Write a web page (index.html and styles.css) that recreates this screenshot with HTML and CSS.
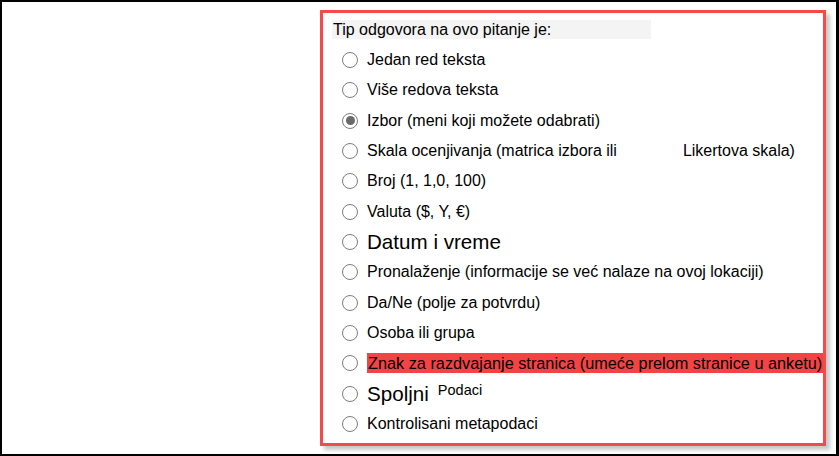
FILE: index.html
```html
<!DOCTYPE html>
<html lang="sr">
<head>
<meta charset="utf-8">
<title>Tip odgovora</title>
<link rel="stylesheet" href="styles.css">
</head>
<body>
<div class="frame">
  <div class="panel">
    <div class="header">Tip odgovora na ovo pitanje je:</div>
    <div class="list">
      <div class="row"><span class="radio"></span><span class="label">Jedan red teksta</span></div>
      <div class="row"><span class="radio"></span><span class="label">Više redova teksta</span></div>
      <div class="row"><span class="radio checked"></span><span class="label">Izbor (meni koji možete odabrati)</span></div>
      <div class="row"><span class="radio"></span><span class="label">Skala ocenjivanja (matrica izbora ili<span class="gap">Likertova skala)</span></span></div>
      <div class="row"><span class="radio"></span><span class="label">Broj (1, 1,0, 100)</span></div>
      <div class="row"><span class="radio"></span><span class="label">Valuta ($, Y, €)</span></div>
      <div class="row"><span class="radio"></span><span class="label big">Datum i vreme</span></div>
      <div class="row"><span class="radio"></span><span class="label">Pronalaženje (informacije se već nalaze na ovoj lokaciji)</span></div>
      <div class="row"><span class="radio"></span><span class="label">Da/Ne (polje za potvrdu)</span></div>
      <div class="row"><span class="radio"></span><span class="label">Osoba ili grupa</span></div>
      <div class="row"><span class="radio"></span><span class="label hl">Znak za razdvajanje stranica (umeće prelom stranice u anketu)</span></div>
      <div class="row"><span class="radio"></span><span class="label big">Spoljni<span class="small">Podaci</span></span></div>
      <div class="row"><span class="radio"></span><span class="label">Kontrolisani metapodaci</span></div>
    </div>
  </div>
</div>
</body>
</html>
```

FILE: styles.css
```css
html, body {
  margin: 0;
  padding: 0;
  background: #fff;
}

body {
  font-family: "Liberation Sans", Arial, sans-serif;
  color: #000;
}

.frame {
  width: 839px;
  height: 456px;
  box-sizing: border-box;
  border: 2px solid #000;
  border-right-width: 3px;
  padding: 8px 0 0 318px;
}

.panel {
  width: 506px;
  height: 436px;
  box-sizing: border-box;
  border: 3px solid #f44a4a;
  box-shadow: 4px 4px 4px rgba(0, 0, 0, 0.22);
  padding: 7px 0 0 9px;
  display: flex;
  flex-direction: column;
}

.header {
  width: 319px;
  height: 19px;
  background: #f4f4f4;
  font-size: 16px;
  line-height: 19px;
  padding-left: 1px;
  box-sizing: border-box;
}

.list {
  margin-top: 6px;
  padding-left: 10px;
  display: flex;
  flex-direction: column;
}

.row {
  height: 30.33px;
  display: flex;
  align-items: center;
}

.radio {
  flex: none;
  width: 16px;
  height: 16px;
  box-sizing: border-box;
  border: 1.5px solid #7c7c7c;
  border-radius: 50%;
  margin-right: 9px;
  display: flex;
  align-items: center;
  justify-content: center;
}

.radio.checked::after {
  content: "";
  width: 9px;
  height: 9px;
  border-radius: 50%;
  background: #6a6a6a;
}

.label {
  font-size: 16px;
  line-height: 20px;
  white-space: nowrap;
}

.label.big {
  font-size: 20.6px;
  line-height: 24px;
}

.gap {
  margin-left: 66px;
}

.small {
  font-size: 14.5px;
  vertical-align: top;
  line-height: 16px;
  margin-left: 9px;
}

.hl {
  flex: 1;
  background: #f44343;
  padding-left: 1px;
  font-size: 16.3px;
}
```
